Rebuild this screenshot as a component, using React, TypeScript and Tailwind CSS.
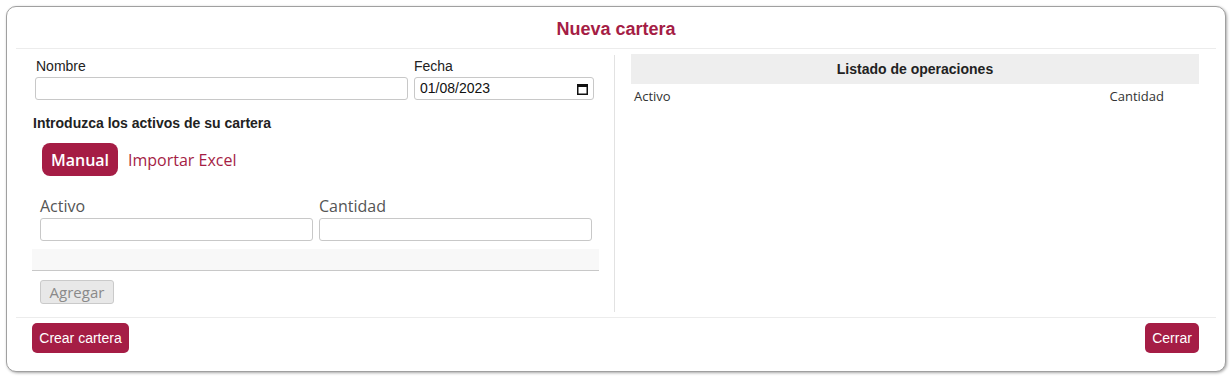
import React from "react";

const arial = { fontFamily: '"Liberation Sans", Arial, sans-serif' };

export default function App() {
  return (
    <div className="bg-white w-[1232px] h-[378px] p-[6px]" style={arial}>
      <div className="w-[1220px] h-[366px] rounded-[10px] border border-[#a0a0a0] shadow-[1px_1px_3px_rgba(0,0,0,0.35)] bg-white flex flex-col px-[9px]">
        {/* header */}
        <div className="h-[42px] border-b border-[#ececec] flex items-center justify-center pt-[3px]">
          <h1 className="text-[18px] font-bold text-[#a51d45]">Nueva cartera</h1>
        </div>
        {/* body */}
        <div className="h-[269px] border-b border-[#ececec] flex pt-[6px] pb-[5px]">
          {/* left column */}
          <div className="w-[599px] border-r border-[#e2e2e2] pl-[16px] pr-[15px] flex flex-col">
            <div className="flex mt-[3px]">
              <div className="ml-[3px] w-[373px] flex flex-col">
                <label className="text-[14px] leading-[16px] text-[#222] ml-[1px]">Nombre</label>
                <div className="mt-[3px] h-[23px] rounded-[3px] border border-[#c8c8c8] bg-white"></div>
              </div>
              <div className="ml-[6px] w-[180px] flex flex-col">
                <label className="text-[14px] leading-[16px] text-[#222]">Fecha</label>
                <div className="mt-[3px] h-[23px] rounded-[3px] border border-[#c8c8c8] bg-white flex items-center justify-between pl-[5px] pr-[5px]">
                  <span className="text-[14px] text-[#111]">01/08/2023</span>
                  <svg width="11" height="12" viewBox="0 0 11 12">
                    <rect x="0.75" y="1.75" width="9.5" height="9.5" fill="none" stroke="#111" strokeWidth="1.5" />
                    <rect x="0" y="1" width="11" height="3" fill="#111" />
                  </svg>
                </div>
              </div>
            </div>
            <div className="mt-[15px] ml-[1px] text-[14px] leading-[17px] font-bold text-[#222]">
              Introduzca los activos de su cartera
            </div>
            <div className="mt-[11px] ml-[10px] flex items-center gap-[10px] font-['Open_Sans',sans-serif]">
              <div className="w-[76px] h-[33px] rounded-[8px] bg-[#a51d45] text-white text-[16px] font-semibold flex items-center justify-center">
                Manual
              </div>
              <div className="text-[16px] text-[#a51d45]">Importar Excel</div>
            </div>
            <div className="mt-[20px] ml-[8px] flex gap-[6px] font-['Open_Sans',sans-serif]">
              <div className="w-[273px] flex flex-col">
                <label className="text-[16px] leading-[22px] text-[#555] -mt-[1px] mb-[1px]">Activo</label>
                <div className="h-[23px] rounded-[3px] border border-[#c8c8c8] bg-white"></div>
              </div>
              <div className="w-[273px] flex flex-col">
                <label className="text-[16px] leading-[22px] text-[#555] -mt-[1px] mb-[1px]">Cantidad</label>
                <div className="h-[23px] rounded-[3px] border border-[#c8c8c8] bg-white"></div>
              </div>
            </div>
            <div className="mt-[8px] h-[22px] bg-[#f8f8f8] border-b border-[#c8c8c8]"></div>
            <div className="mt-[9px] ml-[8px]">
              <div className="w-[74px] h-[24px] rounded-[3px] bg-[#e8e8e8] border border-[#cacaca] text-[#8a8a8a] text-[15px] flex items-center justify-center font-['Open_Sans',sans-serif]">
                Agregar
              </div>
            </div>
          </div>
          {/* right column */}
          <div className="flex-1 pl-[16px] pr-[17px] -mt-[1px]">
            <div className="h-[30px] bg-[#eeeeee] flex items-center justify-center text-[14px] font-bold text-[#222]">
              Listado de operaciones
            </div>
            <div className="mt-[3px] pl-[3px] pr-[35px] flex justify-between text-[13px] leading-[18px] text-[#333] font-['Open_Sans',sans-serif]">
              <span>Activo</span>
              <span>Cantidad</span>
            </div>
          </div>
        </div>
        {/* footer */}
        <div className="flex justify-between pt-[5px] pl-[16px] pr-[17px]">
          <div className="h-[30px] w-[97px] rounded-[5px] bg-[#a51d45] text-white text-[14px] flex items-center justify-center">
            Crear cartera
          </div>
          <div className="h-[30px] w-[54px] rounded-[5px] bg-[#a51d45] text-white text-[14px] flex items-center justify-center">
            Cerrar
          </div>
        </div>
      </div>
    </div>
  );
}
